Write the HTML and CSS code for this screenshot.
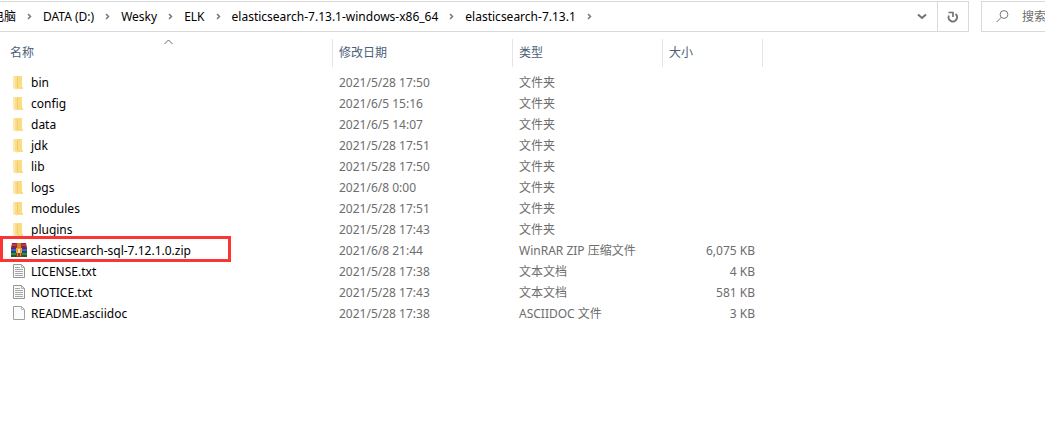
FILE: index.html
```html
<!DOCTYPE html>
<html lang="zh-Hans">
<head>
    <meta charset="UTF-8">
    <meta name="viewport" content="width=device-width, initial-scale=1.0">
    <title>elasticsearch-7.13.1</title>
    <link rel="stylesheet" href="styles.css">
</head>
<body>
    <!-- shared icons -->
    <svg class="sprite" width="0" height="0" aria-hidden="true">
        <symbol id="chevron" viewBox="0 0 5 7">
            <path d="M1 1l2.500 2.500L1 6" fill="none" stroke="#777" stroke-width="1.500"/>
        </symbol>
        <symbol id="folder" viewBox="0 0 16 16">
            <path d="M3 1h8v11h1v2H3z" fill="#fbdc80"/>
            <path d="M6 2h1v11H6z" fill="#f1cc6c"/>
            <path d="M2 1l4 1v13l-4-2z" fill="#fde9ae"/>
            <path d="M4 2h2v11H4z" fill="#f7dc92"/>
        </symbol>
        <symbol id="text" viewBox="0 0 16 16">
            <path d="M2.500.500h8l3 3v10h-11z" fill="#fafafa" stroke="#959595"/>
            <path d="M10.500.500v3h3" fill="none" stroke="#b0b0b0"/>
            <path d="M4 3.500h5M4 5.500h8M4 7.500h8M4 9.500h8M4 11.500h8" stroke="#a6a6a6"/>
        </symbol>
        <symbol id="blank" viewBox="0 0 16 16">
            <path d="M2.500.500h8l3 3v10h-11z" fill="#fbfbfb" stroke="#a0a0a0"/>
            <path d="M10.500.500v3h3" fill="none" stroke="#b8b8b8"/>
        </symbol>
        <symbol id="rar" viewBox="0 0 16 16">
            <path d="M1 0h14l1 5H0z" fill="#8a2140"/>
            <path d="M1 1h14v2H1z" fill="#bb3a55"/>
            <path d="M0 5h16v4H0z" fill="#293c8c"/>
            <path d="M0 6h16v2H0z" fill="#4560b5"/>
            <path d="M0 9h16v5H0z" fill="#1c5a33"/>
            <path d="M0 10h16v2H0z" fill="#3a8a50"/>
            <path d="M5 0h6v14H5z" fill="#8e3f22"/>
            <path d="M6 0h4v5H6z" fill="#e27a2c"/>
            <path d="M5 5h6v5H5z" fill="#e2a23c"/>
            <path d="M6 10h1v3H6zM9 10h1v3H9z" fill="#d68a3c"/>
            <path d="M7 6h2v4H7z" fill="#f7e0b4"/>
        </symbol>
    </svg>
    <header class="toolbar">
        <div class="address">
            <nav class="path" aria-label="路径">
                <a href="#">电脑</a>
                <svg><use href="#chevron"/></svg>
                <a href="#">DATA (D:)</a>
                <svg><use href="#chevron"/></svg>
                <a href="#">Wesky</a>
                <svg><use href="#chevron"/></svg>
                <a href="#">ELK</a>
                <svg><use href="#chevron"/></svg>
                <a href="#">elasticsearch-7.13.1-windows-x86_64</a>
                <svg><use href="#chevron"/></svg>
                <a href="#">elasticsearch-7.13.1</a>
                <svg><use href="#chevron"/></svg>
            </nav>
            <button class="history" type="button" aria-label="历史记录">
                <svg width="10" height="7" viewBox="0 0 10 7"><path d="M1 1.500l4 3.500 4-3.500" fill="none" stroke="#737373" stroke-width="2"/></svg>
            </button>
            <button class="refresh" type="button" aria-label="刷新">
                <svg width="12" height="12" viewBox="0 0 12 12"><path d="M8.500 3A4.200 4.200 0 1 1 2 4.500" fill="none" stroke="#737373" stroke-width="1.800"/><path d="M1.500 1.500H6V6" fill="none" stroke="#737373" stroke-width="1.700"/></svg>
            </button>
        </div>
        <label class="search">
            <svg width="13" height="13" viewBox="0 0 13 13"><circle cx="8" cy="4.500" r="3.900" fill="none" stroke="#777"/><path d="M5.300 7.300L.7 12" stroke="#777"/></svg>
            <input type="text" placeholder="搜索" aria-label="搜索">
        </label>
    </header>
    <main>
        <table class="files">
            <colgroup>
                <col class="col-name">
                <col class="col-date">
                <col class="col-type">
                <col class="col-size">
            </colgroup>
            <thead>
                <tr>
                    <th aria-sort="ascending">名称<svg class="sort" width="9" height="6" viewBox="0 0 9 6"><path d="M.5 5l4-4 4 4" fill="none" stroke="#666"/></svg></th>
                    <th>修改日期</th>
                    <th>类型</th>
                    <th>大小</th>
                </tr>
            </thead>
            <tbody>
                <tr><td><svg><use href="#folder"/></svg>bin</td><td>2021/5/28 17:50</td><td>文件夹</td><td></td></tr>
                <tr><td><svg><use href="#folder"/></svg>config</td><td>2021/6/5 15:16</td><td>文件夹</td><td></td></tr>
                <tr><td><svg><use href="#folder"/></svg>data</td><td>2021/6/5 14:07</td><td>文件夹</td><td></td></tr>
                <tr><td><svg><use href="#folder"/></svg>jdk</td><td>2021/5/28 17:51</td><td>文件夹</td><td></td></tr>
                <tr><td><svg><use href="#folder"/></svg>lib</td><td>2021/5/28 17:50</td><td>文件夹</td><td></td></tr>
                <tr><td><svg><use href="#folder"/></svg>logs</td><td>2021/6/8 0:00</td><td>文件夹</td><td></td></tr>
                <tr><td><svg><use href="#folder"/></svg>modules</td><td>2021/5/28 17:51</td><td>文件夹</td><td></td></tr>
                <tr><td><svg><use href="#folder"/></svg>plugins</td><td>2021/5/28 17:43</td><td>文件夹</td><td></td></tr>
                <tr class="marked"><td><svg><use href="#rar"/></svg>elasticsearch-sql-7.12.1.0.zip</td><td>2021/6/8 21:44</td><td>WinRAR ZIP 压缩文件</td><td>6,075 KB</td></tr>
                <tr><td><svg><use href="#text"/></svg>LICENSE.txt</td><td>2021/5/28 17:38</td><td>文本文档</td><td>4 KB</td></tr>
                <tr><td><svg><use href="#text"/></svg>NOTICE.txt</td><td>2021/5/28 17:43</td><td>文本文档</td><td>581 KB</td></tr>
                <tr><td><svg><use href="#blank"/></svg>README.asciidoc</td><td>2021/5/28 17:38</td><td>ASCIIDOC 文件</td><td>3 KB</td></tr>
            </tbody>
        </table>
    </main>
</body>
</html>
```

FILE: styles.css
```css
* {
    box-sizing: border-box;
}
body {
    --line: #d9d9d9;
    margin: 0;
    background: #fff;
    color: #000;
    font: 12px/20px "Noto Sans", "Noto Sans CJK SC", sans-serif;
    overflow-x: hidden;
}
.sprite {
    position: absolute;
}
.toolbar {
    display: flex;
    gap: 12px;
    padding-top: 1px;
}
.address {
    display: flex;
    flex: 1;
    height: 31px;
    border: 1px solid var(--line);
    border-left: 0;
}
.path {
    display: flex;
    flex: 1;
    align-items: center;
    gap: 11px;
    margin-left: -8px;
    white-space: nowrap;
}
.path a {
    color: #000;
    text-decoration: none;
}
.path svg {
    width: 5px;
    height: 7px;
}
button {
    display: flex;
    align-items: center;
    justify-content: center;
    width: 31px;
    padding: 0;
    border: 0;
    background: none;
}
.refresh {
    border-left: 1px solid var(--line);
}
.search {
    display: flex;
    align-items: center;
    gap: 13px;
    width: 64px;
    padding-left: 14px;
    border: 1px solid var(--line);
    border-right: 0;
}
.search svg {
    flex: none;
}
.search input {
    width: 100%;
    min-width: 0;
    padding: 0;
    border: 0;
    outline: 0;
    font: inherit;
}
.search input::placeholder {
    color: #6d6d6d;
}
.files {
    width: 763px;
    margin-top: 7px;
    table-layout: fixed;
    border-collapse: separate;
    border-spacing: 0;
}
.col-name {
    width: 333px;
}
.col-date {
    width: 180px;
}
.col-type {
    width: 150px;
}
.col-size {
    width: 100px;
}
th {
    position: relative;
    height: 28px;
    padding: 0 6px;
    border-right: 1px solid #e5e5e5;
    color: #4c607a;
    font-weight: normal;
    text-align: left;
}
th:first-child {
    padding-left: 10px;
}
.sort {
    position: absolute;
    top: 0;
    left: 164px;
}
tbody::before {
    content: "";
    display: block;
    height: 5px;
}
td {
    height: 21px;
    padding: 0 6px;
    color: #6d6d6d;
    white-space: nowrap;
}
td:first-child {
    position: relative;
    padding-left: 11px;
    color: #000;
}
td:last-child {
    padding-right: 8px;
    text-align: right;
}
td svg {
    width: 16px;
    height: 16px;
    margin-right: 4px;
    vertical-align: middle;
}
/* red frame round the plugin archive */
.marked td:first-child::after {
    content: "";
    position: absolute;
    top: -4px;
    left: 0;
    box-sizing: border-box;
    width: 231px;
    height: 26px;
    border: 3px solid #fc3434;
}
```
